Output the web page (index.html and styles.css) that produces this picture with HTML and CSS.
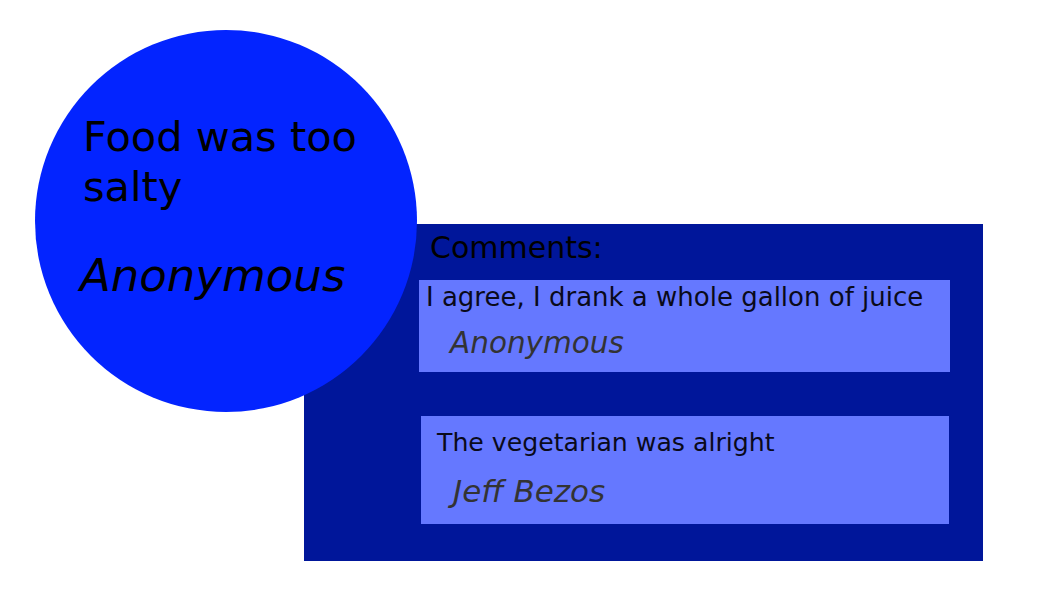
FILE: index.html
```html
<!DOCTYPE html>
<html lang="en">
<head>
    <meta charset="UTF-8">
    <meta name="viewport" content="width=device-width, initial-scale=1.0">
    <title>Review</title>
    <link rel="stylesheet" href="styles.css">
</head>
<body>

    <div class="review">
        <div class="bubble">
            <p class="bubble-text">Food was too salty</p>
            <p class="bubble-author">Anonymous</p>
        </div>

        <div class="comments">
            <h2 class="comments-title">Comments:</h2>
            <div class="comment comment-first">
                <p class="comment-text">I agree, I drank a whole gallon of juice</p>
                <p class="comment-author">Anonymous</p>
            </div>
            <div class="comment comment-second">
                <p class="comment-text">The vegetarian was alright</p>
                <p class="comment-author">Jeff Bezos</p>
            </div>
        </div>
    </div>

</body>
</html>
```

FILE: styles.css
```css
    body {
        margin: 0;
        padding: 0;
        font-family: 'DejaVu Sans', Verdana, sans-serif;
        background-color: #ffffff;
        color: #000000;
    }
    p, h2 {
        margin: 0;
    }
    .review {
        display: flex;
        align-items: flex-start;
        padding: 30px 0 0 35px;
    }
    .bubble {
        flex: 0 0 382px;
        height: 382px;
        border-radius: 50%;
        background-color: #0324ff;
        padding: 82px 44px 0 48px;
        box-sizing: border-box;
        position: relative;
        z-index: 1;
    }
    .bubble-text {
        font-size: 41.5px;
        line-height: 50px;
    }
    .bubble-author {
        margin-top: 37px;
        margin-left: -3px;
        font-size: 45px;
        font-style: italic;
    }
    .comments {
        flex: 0 0 679px;
        height: 337px;
        margin-top: 194px;
        margin-left: -113px;
        padding: 7px 33px 0 115px;
        box-sizing: border-box;
        background-color: #00169a;
    }
    .comments-title {
        font-size: 30px;
        font-weight: normal;
        margin-left: 11px;
        line-height: 34px;
    }
    .comment {
        background-color: #6578ff;
        color: #0a0a1a;
    }
    .comment-author {
        font-style: italic;
        color: #333333;
        font-size: 29.5px;
    }
    /* first one sits a bit tighter than the second */
    .comment-first {
        margin-top: 15px;
        height: 92px;
        padding: 2px 6px 0 7px;
        box-sizing: border-box;
    }
    .comment-first .comment-text {
        font-size: 26px;
    }
    .comment-first .comment-author {
        margin-top: 14px;
        margin-left: 24px;
    }
    .comment-second {
        margin: 44px 1px 0 2px;
        height: 108px;
        padding: 12px 15px 0 16px;
        box-sizing: border-box;
    }
    .comment-second .comment-text {
        font-size: 25.2px;
    }
    .comment-second .comment-author {
        margin-top: 16px;
        margin-left: 16px;
        font-size: 31px;
    }
```
